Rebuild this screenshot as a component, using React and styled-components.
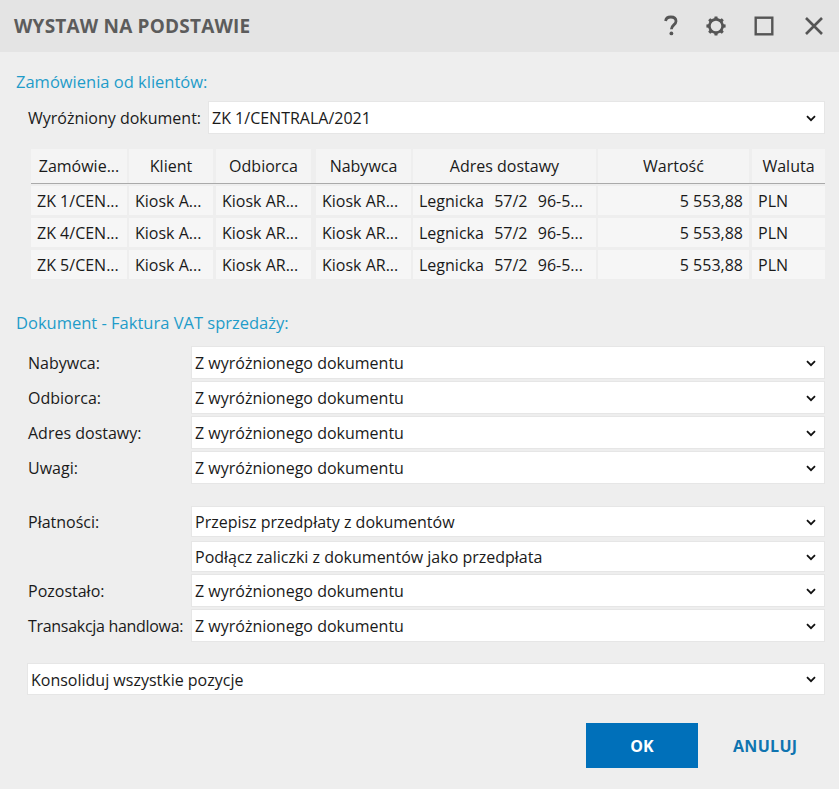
import React from "react";
import styled, { createGlobalStyle } from "styled-components";

const GlobalStyle = createGlobalStyle`
  html, body {
    margin: 0;
    padding: 0;
    background: #eeeeee;
  }
  body {
    font-family: "Open Sans", "Noto Sans", sans-serif;
    font-size: 16px;
    color: #1a1a1a;
  }
`;

const Dialog = styled.div`
  width: 839px;
  height: 789px;
  display: flex;
  flex-direction: column;
  background: #eeeeee;
  overflow: hidden;
`;

const TitleBar = styled.div`
  display: flex;
  align-items: center;
  justify-content: space-between;
  height: 52px;
  padding: 0 14px;
  background: #e4e4e4;
`;

const Title = styled.div`
  font-size: 19px;
  font-weight: 700;
  color: #5c5c5c;
  letter-spacing: 0.2px;
`;

const TitleIcons = styled.div`
  display: flex;
  align-items: center;
  margin-right: -3px;
`;

const IconSlot = styled.div`
  display: flex;
  margin-left: ${(p) => p.$left}px;
`;

const Body = styled.div`
  display: flex;
  flex-direction: column;
  padding: 0 14px 0 16px;
`;

const SectionTitle = styled.div`
  height: 22px;
  line-height: 22px;
  font-size: 16.5px;
  color: #1f9cc9;
  margin-top: ${(p) => p.$top}px;
`;

const Row = styled.div`
  display: flex;
  align-items: center;
  height: ${(p) => p.$height || 33}px;
  margin-top: ${(p) => p.$top || 0}px;
  padding-left: ${(p) => p.$left || 12}px;
`;

const Label = styled.div`
  flex: 0 0 ${(p) => p.$width}px;
  padding-top: 1px;
  white-space: nowrap;
  letter-spacing: ${(p) => p.$spacing || 0}px;
`;

const SelectBox = styled.div`
  flex: 1;
  align-self: stretch;
  box-sizing: border-box;
  display: flex;
  align-items: center;
  justify-content: space-between;
  padding: 1px 8px 0 3px;
  background: #ffffff;
  border: 1px solid #e6e6e6;
`;

const Table = styled.div`
  display: flex;
  flex-direction: column;
  margin: 15px 0 0 15px;
`;

const HeaderRow = styled.div`
  display: flex;
  height: 34px;
  border-bottom: 1px solid #aaaaaa;
`;

const HeaderCell = styled.div`
  width: ${(p) => p.$width}px;
  margin-right: ${(p) => p.$gap}px;
  box-sizing: border-box;
  display: flex;
  align-items: center;
  justify-content: center;
  padding-bottom: 1px;
  background: #f4f4f4;
  white-space: nowrap;
`;

const DataRow = styled.div`
  display: flex;
  height: 29px;
  margin-top: ${(p) => p.$top}px;
`;

const DataCell = styled.div`
  width: ${(p) => p.$width}px;
  margin-right: ${(p) => p.$gap}px;
  box-sizing: border-box;
  display: flex;
  align-items: center;
  justify-content: ${(p) => (p.$right ? "flex-end" : "flex-start")};
  padding: 1px 6px 0;
  background: #f6f6f6;
  white-space: pre;
  word-spacing: ${(p) => p.$wordSpacing || 0}px;
`;

const Footer = styled.div`
  display: flex;
  align-items: center;
  margin-top: 28px;
`;

const OkButton = styled.button`
  width: 112px;
  height: 45px;
  margin-left: 570px;
  border: 0;
  background: #0070ba;
  color: #ffffff;
  font: 700 16px "Open Sans", sans-serif;
`;

const CancelButton = styled.button`
  margin-left: 35px;
  padding: 0;
  border: 0;
  background: transparent;
  color: #0f74b0;
  font: 700 16px "Open Sans", sans-serif;
  letter-spacing: 0.3px;
`;

const Chevron = () => (
  <svg width="10" height="7" viewBox="0 0 10 7">
    <path d="M1 1.2 L5 5.2 L9 1.2" fill="none" stroke="#111" strokeWidth="1.8" />
  </svg>
);

const HelpIcon = () => (
  <svg width="28" height="28" viewBox="0 0 28 28">
    <path
      d="M8.6 9 C8.9 6.2 11 5 13.8 5 C16.9 5 19 6.5 19 9.2 C19 12.8 14.4 13 14.4 17.2"
      fill="none"
      stroke="#555"
      strokeWidth="2.8"
    />
    <circle cx="14.4" cy="21.4" r="1.9" fill="#555" />
  </svg>
);

const GearIcon = () => (
  <svg width="28" height="28" viewBox="0 0 28 28">
    <circle cx="14" cy="14" r="6.6" fill="none" stroke="#555" strokeWidth="2.6" />
    {[0, 45, 90, 135, 180, 225, 270, 315].map((a) => (
      <path
        key={a}
        d="M12 8 L12.6 4.4 L15.4 4.4 L16 8 Z"
        fill="#555"
        transform={`rotate(${a} 14 14)`}
      />
    ))}
  </svg>
);

const MaximizeIcon = () => (
  <svg width="28" height="28" viewBox="0 0 28 28">
    <rect x="5.7" y="5.7" width="16.6" height="16.6" fill="none" stroke="#555" strokeWidth="2.4" />
  </svg>
);

const CloseIcon = () => (
  <svg width="28" height="28" viewBox="0 0 28 28">
    <path d="M6 6 L22 22 M22 6 L6 22" fill="none" stroke="#555" strokeWidth="2.6" />
  </svg>
);

const Select = ({ value }) => (
  <SelectBox>
    <span>{value}</span>
    <Chevron />
  </SelectBox>
);

const COLUMNS = [
  { title: "Zamówie...", width: 96, gap: 2 },
  { title: "Klient", width: 84, gap: 3 },
  { title: "Odbiorca", width: 95, gap: 5 },
  { title: "Nabywca", width: 95, gap: 2 },
  { title: "Adres dostawy", width: 183, gap: 2, wordSpacing: 1 },
  { title: "Wartość", width: 151, gap: 3 },
  { title: "Waluta", width: 73, gap: 0 },
];

const ROWS = ["ZK 1/CEN...", "ZK 4/CEN...", "ZK 5/CEN..."].map((doc) => [
  doc,
  "Kiosk A...",
  "Kiosk AR...",
  "Kiosk AR...",
  "Legnicka  57/2  96-5...",
  "5 553,88",
  "PLN",
]);

const DEFAULT = "Z wyróżnionego dokumentu";

export default function App() {
  return (
    <Dialog>
      <GlobalStyle />
      <TitleBar>
        <Title>WYSTAW NA PODSTAWIE</Title>
        <TitleIcons>
          <IconSlot $left={0}>
            <HelpIcon />
          </IconSlot>
          <IconSlot $left={17}>
            <GearIcon />
          </IconSlot>
          <IconSlot $left={20}>
            <MaximizeIcon />
          </IconSlot>
          <IconSlot $left={22}>
            <CloseIcon />
          </IconSlot>
        </TitleIcons>
      </TitleBar>
      <Body>
        <SectionTitle $top={19}>Zamówienia od klientów:</SectionTitle>
        <Row $top={8}>
          <Label $width={180}>Wyróżniony dokument:</Label>
          <Select value="ZK 1/CENTRALA/2021" />
        </Row>
        <Table>
          <HeaderRow>
            {COLUMNS.map((c) => (
              <HeaderCell key={c.title} $width={c.width} $gap={c.gap}>
                {c.title}
              </HeaderCell>
            ))}
          </HeaderRow>
          {ROWS.map((cells, r) => (
            <DataRow key={r} $top={r === 0 ? 2 : 3}>
              {cells.map((text, i) => (
                <DataCell
                  key={i}
                  $width={COLUMNS[i].width}
                  $gap={COLUMNS[i].gap}
                  $wordSpacing={COLUMNS[i].wordSpacing}
                  $right={i === 5}
                >
                  {text}
                </DataCell>
              ))}
            </DataRow>
          ))}
        </Table>
        <SectionTitle $top={33}>Dokument - Faktura VAT sprzedaży:</SectionTitle>
        <Row $top={12}>
          <Label $width={163}>Nabywca:</Label>
          <Select value={DEFAULT} />
        </Row>
        <Row $top={2}>
          <Label $width={163}>Odbiorca:</Label>
          <Select value={DEFAULT} />
        </Row>
        <Row $top={2}>
          <Label $width={163}>Adres dostawy:</Label>
          <Select value={DEFAULT} />
        </Row>
        <Row $top={2}>
          <Label $width={163}>Uwagi:</Label>
          <Select value={DEFAULT} />
        </Row>
        <Row $top={22} $height={31}>
          <Label $width={163}>Płatności:</Label>
          <Select value="Przepisz przedpłaty z dokumentów" />
        </Row>
        <Row $top={4} $height={31}>
          <Label $width={163} />
          <Select value="Podłącz zaliczki z dokumentów jako przedpłata" />
        </Row>
        <Row $top={2}>
          <Label $width={163}>Pozostało:</Label>
          <Select value={DEFAULT} />
        </Row>
        <Row $top={2}>
          <Label $width={163} $spacing={-0.3}>
            Transakcja handlowa:
          </Label>
          <Select value={DEFAULT} />
        </Row>
        <Row $top={21} $height={32} $left={11}>
          <Select value="Konsoliduj wszystkie pozycje" />
        </Row>
        <Footer>
          <OkButton>OK</OkButton>
          <CancelButton>ANULUJ</CancelButton>
        </Footer>
      </Body>
    </Dialog>
  );
}
